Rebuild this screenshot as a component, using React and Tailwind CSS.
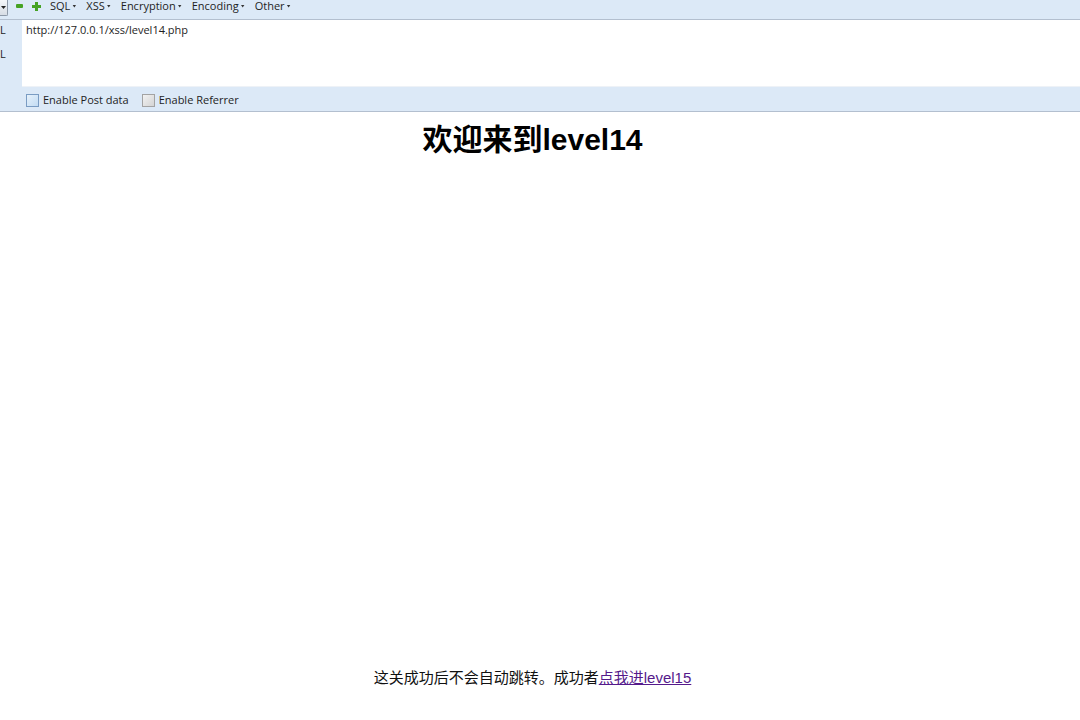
const menus = ['SQL', 'XSS', 'Encryption', 'Encoding', 'Other'];

const Caret = () => <span className="ml-[2px] inline-block h-[3px] w-[4px] bg-[#333] [clip-path:polygon(0_0,100%_0,50%_100%)]"></span>;

export default function App() {
  return (
    <div className="min-h-[720px] bg-white" style={{ fontFamily: '"Open Sans", "Noto Sans", "Noto Sans CJK SC", sans-serif' }}>
      {/* hackbar */}
      <div className="bg-[#dce9f7] text-[#1e1e1e]">
        <div className="flex h-[20px] items-start border-b border-[#b3bfcf] text-[11px] leading-[12px]">
          <div className="relative h-[16px] w-[8px] rounded-br-[2px] border border-l-0 border-t-0 border-[#8d99a8] bg-gradient-to-b from-[#f4f6f9] to-[#d7dde5]">
            <span className="absolute left-[1px] top-[6px] h-[3px] w-[5px] bg-[#222] [clip-path:polygon(0_0,100%_0,50%_100%)]"></span>
          </div>
          <div className="ml-[8px] mt-[1px] flex h-[10px] items-center gap-[9px]">
            <span className="h-[4px] w-[7px] rounded-[1px] bg-[#46a224]"></span>
            <svg width="9" height="9" viewBox="0 0 9 9">
              <path d="M3 0h3v3h3v3H6v3H3V6H0V3h3z" fill="#46a224" />
            </svg>
          </div>
          <div className="ml-[9px] flex items-center gap-[10px]">
            {menus.map(m => (
              <span key={m} className="flex items-center">{m}<Caret /></span>
            ))}
          </div>
        </div>
        <div className="flex h-[67px]">
          <div className="flex w-[22px] flex-col gap-[10px] pt-[3px] text-[11px] leading-[14px]">
            <span>L</span>
            <span>L</span>
          </div>
          <div className="flex-1 border-b border-[#eef2f7] bg-white px-[4px] pt-[3px] text-[11px] leading-[14px]">
            http://127.0.0.1/xss/level14.php
          </div>
        </div>
        <div className="flex h-[25px] items-center border-b border-[#b3bfcf] pl-[26px] pt-[2px] text-[11px]">
          <span className="h-[13px] w-[13px] border border-[#7a9cc3] bg-gradient-to-br from-[#e6f1fb] to-[#c3dcf3]"></span>
          <span className="ml-[4px]">Enable Post data</span>
          <span className="ml-[13px] h-[13px] w-[13px] border border-[#a3a3a3] bg-gradient-to-br from-[#f2f2f2] to-[#d4d4d4]"></span>
          <span className="ml-[4px]">Enable Referrer</span>
        </div>
      </div>

      {/* page */}
      <div className="pr-[15px]" style={{ fontFamily: '"Liberation Sans", "Noto Sans CJK SC", sans-serif' }}>
        <h1 className="mt-[10px] text-center text-[30px] font-bold leading-[36px] text-black">欢迎来到level14</h1>
        <p className="mt-[510px] text-center text-[15px] leading-[20px] text-[#111]">
          这关成功后不会自动跳转。成功者<a href="#" className="text-[#551a8b] underline">点我进level15</a>
        </p>
      </div>
    </div>
  );
}
